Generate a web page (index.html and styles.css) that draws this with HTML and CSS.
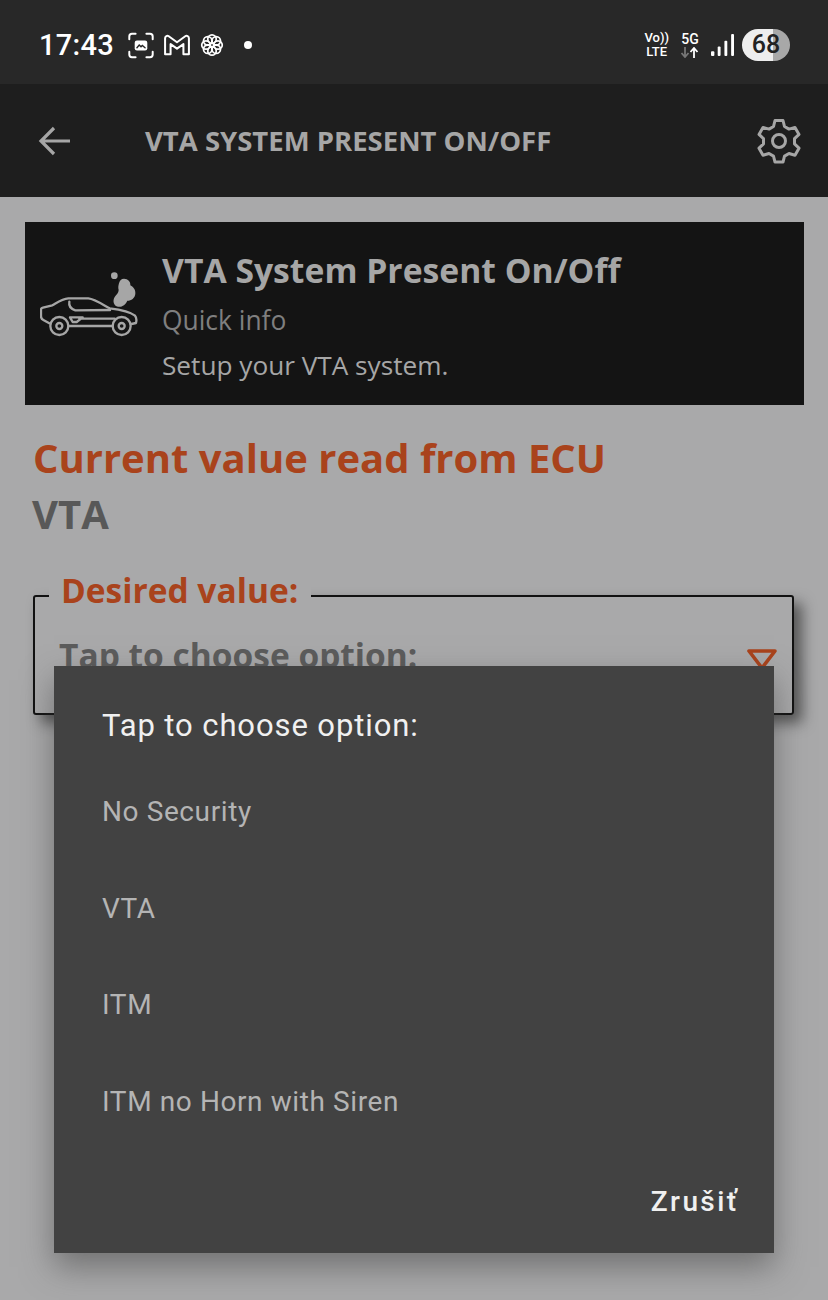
FILE: index.html
```html
<!DOCTYPE html>
<html lang="en">
<head>
    <meta charset="UTF-8">
    <meta name="viewport" content="width=device-width, initial-scale=1.0">
    <title>VTA System Present On/Off</title>
    <link rel="stylesheet" href="styles.css">
</head>
<body>
  <div class="status-bar">
    <div class="status-left">
      <span class="clock">17:43</span>
      <svg class="st-frame" width="28" height="27" viewBox="0 0 30 30" fill="none" stroke="#fff" stroke-width="2.2" stroke-linecap="round">
        <path d="M2 8V5a3 3 0 0 1 3-3h4M21 2h4a3 3 0 0 1 3 3v3M28 22v3a3 3 0 0 1-3 3h-4M9 28H5a3 3 0 0 1-3-3v-3"/>
        <rect x="8" y="9.5" width="14" height="11" rx="2.5" fill="#fff" stroke="none"/>
        <path d="M10.5 17.5l2.500-3 2 2 1.500-1.500 3 2.500" stroke="#282828" stroke-width="1.6"/>
      </svg>
      <svg class="st-mail" width="28" height="22" viewBox="0 0 30 24" fill="none" stroke="#fff" stroke-width="2.2" stroke-linejoin="round">
        <path d="M2 4.500a2.500 2.500 0 0 1 4-2L15 9l9-6.500a2.500 2.500 0 0 1 4 2V22h-6V11l-7 5-7-5v11H2z"/>
      </svg>
      <svg class="st-flower" width="24" height="24" viewBox="0 0 26 26" fill="none" stroke="#fff" stroke-width="1.9">
        <circle cx="13" cy="6.500" r="4.600"/><circle cx="13" cy="19.500" r="4.600"/>
        <circle cx="6.500" cy="13" r="4.600"/><circle cx="19.500" cy="13" r="4.600"/>
        <circle cx="8.400" cy="8.400" r="4.600"/><circle cx="17.600" cy="8.400" r="4.600"/>
        <circle cx="8.400" cy="17.600" r="4.600"/><circle cx="17.600" cy="17.600" r="4.600"/>
      </svg>
      <span class="dot"></span>
    </div>
    <div class="status-right">
      <span class="net-stack">
        <span>Vo))</span>
        <span>LTE</span>
      </span>
      <span class="net-stack net-5g">
        <span>5G</span>
        <svg width="20" height="11" viewBox="0 0 20 11" fill="none" stroke-width="1.8">
          <path d="M5 0v9M1.500 6L5 10l3.500-4" stroke="#777"/>
          <path d="M14 11V2M10.500 5L14 1l3.500 4" stroke="#fff"/>
        </svg>
      </span>
      <svg class="signal" width="23" height="24" viewBox="0 0 24 25" fill="#fff">
        <rect x="0" y="19" width="3.500" height="5" rx="1"/>
        <rect x="7" y="14" width="3" height="10" rx="1"/>
        <rect x="14" y="8" width="3" height="16" rx="1"/>
        <rect x="21" y="1" width="3" height="23" rx="1"/>
      </svg>
      <span class="battery">68</span>
    </div>
  </div>

  <div class="toolbar">
    <svg class="back" width="36" height="32" viewBox="0 0 36 32" fill="none" stroke="#a6a6a6" stroke-width="3.200">
      <path d="M33 16H4M17 3L4 16l13 13"/>
    </svg>
    <h1>VTA SYSTEM PRESENT ON/OFF</h1>
    <svg class="gear" width="48" height="48" viewBox="0 0 48 48" fill="none" stroke="#a6a6a6" stroke-width="3" stroke-linejoin="round">
      <path d="M20 3.500h8l1.500 6 4.500 2.600 6-1.700 4 7-4.500 4.300v5.200l4.500 4.300-4 7-6-1.700-4.500 2.600-1.500 6h-8l-1.500-6-4.500-2.600-6 1.700-4-7 4.500-4.300v-5.200L4 17.400l4-7 6 1.700 4.500-2.600z"/>
      <circle cx="24" cy="24" r="6.500"/>
    </svg>
  </div>

  <div class="content">
    <div class="info-card">
      <svg class="car" width="100" height="70" viewBox="60 144 300 210" fill="none" stroke="#a6a6a6" stroke-width="7" stroke-linejoin="round" stroke-linecap="round">
        <circle cx="283" cy="167" r="10" fill="#a6a6a6" stroke="none"/>
        <path d="M312 176c12 0 20 9 19 20 10 5 16 14 15 25-1 13-12 21-24 21-5 12-16 20-28 18-13-2-17-18-10-29 5-7 12-12 12-21-2-7-1-13 1-20 2-9 7-14 15-14z" fill="#a6a6a6" stroke="none"/>
        <path d="M88 310l-18-10c-6-3-7-6-7-11v-20c0-3 2-5 6-6l28-7c14-8 30-20 48-21h60c20 2 45 20 64 30 25 3 60 9 76 22 5 6 5 14 3 22l-14 3"/>
        <path d="M146 318h132"/>
        <circle cx="118" cy="318" r="27"/><circle cx="118" cy="318" r="9"/>
        <circle cx="305" cy="318" r="27"/><circle cx="305" cy="318" r="9"/>
        <path d="M148 245c-2 12 5 22 18 26l104-1M178 296h106M150 292h38l-18 14h-12z"/>
      </svg>
      <div class="info-text">
        <div class="info-title">VTA System Present On/Off</div>
        <div class="info-sub">Quick info</div>
        <div class="info-desc">Setup your VTA system.</div>
      </div>
    </div>

    <div class="current-label">Current value read from ECU</div>
    <div class="current-value">VTA</div>

    <div class="select-box">
      <span class="select-legend">Desired value:</span>
      <div class="select-row">
        <span>Tap to choose option:</span>
        <svg class="caret" width="32" height="24" viewBox="0 0 32 24" fill="none" stroke="#a9431c" stroke-width="3.600" stroke-linejoin="round">
          <path d="M3 3h26l-13 17z"/>
        </svg>
      </div>
    </div>
  </div>

  <div class="dialog">
    <div class="dialog-title">Tap to choose option:</div>
    <ul class="dialog-list">
      <li>No Security</li>
      <li>VTA</li>
      <li>ITM</li>
      <li>ITM no Horn with Siren</li>
    </ul>
    <div class="dialog-actions">Zrušiť</div>
  </div>
</body>
</html>
```

FILE: styles.css
```css
html, body {
  margin: 0;
  padding: 0;
}
body {
  width: 828px;
  height: 1300px;
  overflow: hidden;
  position: relative;
  background-color: #a9a9aa;
  font-family: "Open Sans", sans-serif;
}

/* status bar */
.status-bar {
  height: 84px;
  background-color: #282828;
  display: flex;
  align-items: center;
  justify-content: space-between;
  padding: 6px 38px 0 39px;
  box-sizing: border-box;
  color: #fff;
}
.status-left, .status-right {
  display: flex;
  align-items: center;
}
.status-left svg {
  display: block;
  flex: none;
}
.clock {
  width: 75px;
  font-family: Roboto, sans-serif;
  font-size: 29px;
  font-weight: 500;
  letter-spacing: 0.3px;
  margin-right: 13px;
}
.st-frame {
  margin-right: 8px;
}
.st-mail {
  margin-right: 9px;
}
.dot {
  width: 8px;
  height: 8px;
  border-radius: 50%;
  background-color: #fff;
  margin-left: 20px;
}
.net-stack {
  display: flex;
  flex-direction: column;
  align-items: center;
  font-family: Roboto, sans-serif;
  font-size: 13px;
  font-weight: 500;
  line-height: 14px;
  margin-right: 11px;
}
.net-5g {
  font-size: 14px;
  margin-right: 11px;
}
.net-5g svg {
  display: block;
  margin-top: 1px;
}
.signal {
  margin-right: 8px;
}
.battery {
  width: 48px;
  height: 32px;
  border-radius: 16px;
  background: linear-gradient(to right, #eeeeee 0, #eeeeee 65%, #a8a8a8 65%);
  color: #222;
  font-family: Roboto, sans-serif;
  font-size: 25px;
  font-weight: 500;
  line-height: 32px;
  text-align: center;
}

/* toolbar */
.toolbar {
  height: 113px;
  background-color: #1e1e1e;
  display: flex;
  align-items: center;
  padding: 0 25px 0 37px;
}
.toolbar h1 {
  flex: 1;
  margin: 0 0 0 72px;
  font-size: 27.5px;
  font-weight: 700;
  color: #a6a6a6;
  letter-spacing: 0;
}

/* page content */
.content {
  padding: 25px 24px 0;
}
.info-card {
  height: 183px;
  margin-left: 1px;
  background-color: #141414;
  display: flex;
  color: #a6a6a6;
}
.car {
  margin: 46px 0 0 15px;
  flex: none;
}
.info-text {
  margin-left: 22px;
}
.info-title {
  font-size: 33.7px;
  font-weight: 700;
  line-height: 44px;
  margin-top: 26px;
}
.info-sub {
  font-size: 26.4px;
  line-height: 36px;
  margin-top: 10px;
  color: #7f7f7f;
}
.info-desc {
  font-size: 26.2px;
  line-height: 36px;
  margin-top: 9px;
}
.current-label {
  margin: 27px 0 0 9px;
  font-size: 40px;
  font-weight: 700;
  line-height: 52px;
  color: #a9431c;
}
.current-value {
  margin-left: 8px;
  padding-top: 2px;
  font-size: 40px;
  font-weight: 700;
  line-height: 56px;
  color: #585858;
}
.select-box {
  position: relative;
  height: 116px;
  margin: 53px 10px 0 9px;
  border: 2px solid #111;
  border-radius: 3px;
  box-shadow: 8px 8px 14px rgba(30, 30, 30, 0.6);
}
.select-legend {
  position: absolute;
  top: -29px;
  left: 14px;
  padding: 0 13px 0 12px;
  background-color: #a9a9aa;
  font-size: 33.5px;
  font-weight: 700;
  line-height: 44px;
  color: #a9431c;
}
.select-row {
  display: flex;
  align-items: center;
  justify-content: space-between;
  padding: 36px 14px 0 24px;
  font-size: 33.5px;
  font-weight: 700;
  line-height: 44px;
  color: #5c5c5c;
}
.caret {
  margin-top: 10px;
}

/* dialog over the page */
.dialog {
  position: absolute;
  left: 54px;
  top: 666px;
  width: 720px;
  height: 587px;
  background-color: #424242;
  box-shadow: 0 14px 30px rgba(60, 60, 60, 0.5);
  font-family: Roboto, sans-serif;
}
.dialog-title {
  margin: 40px 0 0 48px;
  font-size: 31px;
  line-height: 40px;
  letter-spacing: 0.9px;
  color: #f0f0f0;
}
.dialog-list {
  list-style: none;
  margin: 18px 0 0;
  padding: 0 0 0 48px;
  font-size: 28px;
  letter-spacing: 0.6px;
  color: #b4b4b4;
}
.dialog-list li {
  height: 96.500px;
  line-height: 96.500px;
}
.dialog-actions {
  position: absolute;
  right: 35px;
  bottom: 35px;
  font-size: 28px;
  font-weight: 500;
  letter-spacing: 2.400px;
  color: #f0f0f0;
}
```
